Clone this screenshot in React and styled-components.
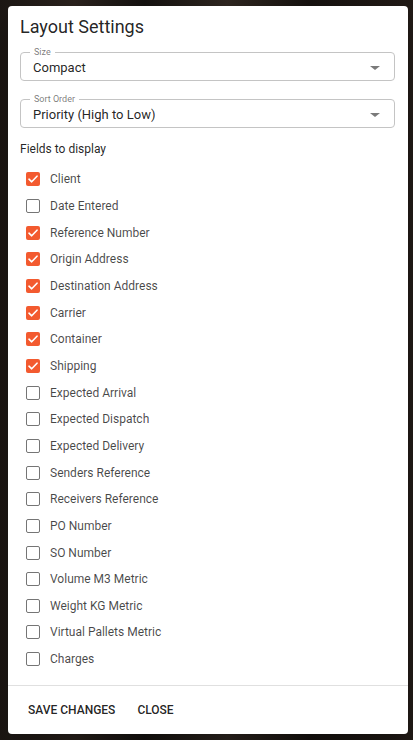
import React, { useState } from "react";
import styled, { createGlobalStyle } from "styled-components";

const GlobalStyle = createGlobalStyle`
  html, body {
    margin: 0;
    padding: 0;
    height: 100%;
  }
  body {
    font-family: Roboto, "Liberation Sans", Arial, sans-serif;
    background: linear-gradient(
      90deg,
      #1c1714 0%,
      #2a221d 18%,
      #151210 35%,
      #2e2620 55%,
      #16120f 75%,
      #221b17 100%
    );
  }
`;

const Page = styled.div`
  width: 413px;
  height: 740px;
  padding: 6px 5px 0 8px;
  box-sizing: border-box;
`;

const Dialog = styled.div`
  width: 400px;
  height: 728px;
  background: #fff;
  border-radius: 4px;
  box-shadow: 0 11px 15px -7px rgba(0, 0, 0, 0.2),
    0 24px 38px 3px rgba(0, 0, 0, 0.14);
  display: flex;
  flex-direction: column;
  box-sizing: border-box;
`;

const Body = styled.div`
  flex: 1;
  padding: 9px 13px 0 12px;
`;

const Title = styled.h2`
  margin: 0 0 13px;
  font-size: 18px;
  line-height: 24px;
  font-weight: 400;
  color: rgba(0, 0, 0, 0.87);
`;

const Field = styled.div`
  position: relative;
  height: 29px;
  border: 1px solid #c4c4c4;
  border-radius: 4px;
  box-sizing: border-box;
  display: flex;
  align-items: center;
  padding: 0 13px 0 12px;
  margin-bottom: ${(p) => p.$gap || 0}px;
`;

const Legend = styled.span`
  position: absolute;
  top: -6px;
  left: 9px;
  padding: 0 4px;
  background: #fff;
  font-size: 9px;
  line-height: 11px;
  color: rgba(0, 0, 0, 0.54);
`;

const Value = styled.span`
  flex: 1;
  font-size: 13px;
  line-height: 16px;
  padding-top: 2px;
  color: rgba(0, 0, 0, 0.87);
`;

const Arrow = styled.span`
  width: 0;
  height: 0;
  border-left: 5px solid transparent;
  border-right: 5px solid transparent;
  border-top: 4.5px solid #7a7a7a;
  margin-top: 2px;
  margin-right: 1px;
`;

const SectionLabel = styled.div`
  margin-top: 13px;
  font-size: 12px;
  line-height: 16px;
  color: rgba(0, 0, 0, 0.87);
`;

const List = styled.div`
  margin-top: 9px;
  display: flex;
  flex-direction: column;
`;

const Row = styled.label`
  height: 26.67px;
  display: flex;
  align-items: center;
  gap: 10px;
  padding-left: 6px;
  cursor: pointer;
`;

const Box = styled.span`
  width: 14px;
  height: 14px;
  box-sizing: border-box;
  border-radius: 2px;
  border: ${(p) => (p.$checked ? "none" : "1.5px solid #757575")};
  background: ${(p) => (p.$checked ? "#f35a2f" : "#fff")};
  display: flex;
  align-items: center;
  justify-content: center;
`;

const RowText = styled.span`
  font-size: 12px;
  line-height: 16px;
  color: rgba(0, 0, 0, 0.72);
`;

const Footer = styled.div`
  height: 48px;
  border-top: 1px solid #e0e0e0;
  display: flex;
  align-items: center;
  gap: 6px;
  padding: 0 12px;
`;

const Button = styled.button`
  background: none;
  border: none;
  padding: 6px 8px;
  font-family: Roboto, "Liberation Sans", Arial, sans-serif;
  font-size: 12px;
  font-weight: 500;
  line-height: 16px;
  text-transform: uppercase;
  color: rgba(0, 0, 0, 0.87);
  cursor: pointer;
`;

const fields = [
  ["Client", true],
  ["Date Entered", false],
  ["Reference Number", true],
  ["Origin Address", true],
  ["Destination Address", true],
  ["Carrier", true],
  ["Container", true],
  ["Shipping", true],
  ["Expected Arrival", false],
  ["Expected Dispatch", false],
  ["Expected Delivery", false],
  ["Senders Reference", false],
  ["Receivers Reference", false],
  ["PO Number", false],
  ["SO Number", false],
  ["Volume M3 Metric", false],
  ["Weight KG Metric", false],
  ["Virtual Pallets Metric", false],
  ["Charges", false],
];

const Check = () => (
  <svg width="10" height="8" viewBox="0 0 10 8">
    <path
      d="M1 4.2 L3.7 6.8 L9 1.2"
      fill="none"
      stroke="#fff"
      strokeWidth="1.6"
      strokeLinecap="round"
      strokeLinejoin="round"
    />
  </svg>
);

export default function App() {
  const [checked, setChecked] = useState(fields.map((f) => f[1]));

  const toggle = (i) =>
    setChecked((c) => c.map((v, j) => (j === i ? !v : v)));

  return (
    <>
      <GlobalStyle />
      <Page>
        <Dialog>
          <Body>
            <Title>Layout Settings</Title>
            <Field $gap={18}>
              <Legend>Size</Legend>
              <Value>Compact</Value>
              <Arrow />
            </Field>
            <Field>
              <Legend>Sort Order</Legend>
              <Value>Priority (High to Low)</Value>
              <Arrow />
            </Field>
            <SectionLabel>Fields to display</SectionLabel>
            <List>
              {fields.map(([name], i) => (
                <Row key={name} onClick={() => toggle(i)}>
                  <Box $checked={checked[i]}>{checked[i] && <Check />}</Box>
                  <RowText>{name}</RowText>
                </Row>
              ))}
            </List>
          </Body>
          <Footer>
            <Button>Save Changes</Button>
            <Button>Close</Button>
          </Footer>
        </Dialog>
      </Page>
    </>
  );
}
